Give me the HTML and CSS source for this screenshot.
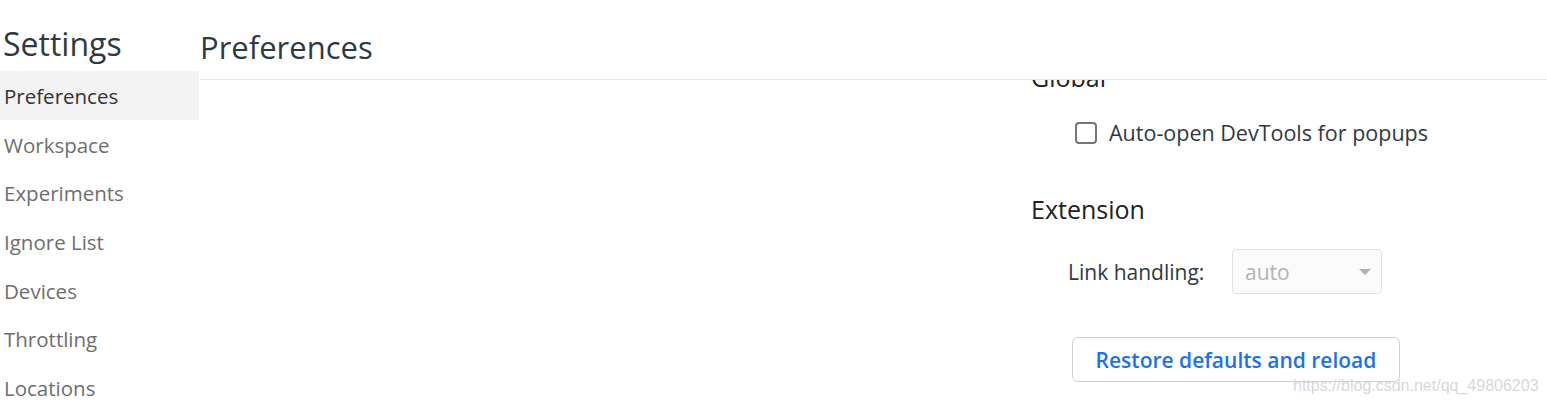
FILE: index.html
```html
<!DOCTYPE html>
<html>
<head>
<meta charset="utf-8">
<link rel="stylesheet" href="styles.css">
</head>
<body>
<div class="app">
  <nav class="sidebar">
    <div class="title">Settings</div>
    <ul class="tabs">
      <li class="tab selected">Preferences</li>
      <li class="tab">Workspace</li>
      <li class="tab">Experiments</li>
      <li class="tab">Ignore List</li>
      <li class="tab">Devices</li>
      <li class="tab">Throttling</li>
      <li class="tab">Locations</li>
    </ul>
  </nav>
  <main class="main">
    <header class="header">Preferences</header>
    <div class="viewport">
      <div class="column">
        <h2 class="section-title">Global</h2>
        <label class="check-row"><span class="checkbox"></span><span>Auto-open DevTools for popups</span></label>
        <h2 class="section-title ext">Extension</h2>
        <div class="field-row">
          <span class="field-label">Link handling:</span>
          <div class="select"><span>auto</span><span class="arrow"></span></div>
        </div>
        <button class="restore">Restore defaults and reload</button>
      </div>
    </div>
  </main>
</div>
<div class="watermark">https://blog.csdn.net/qq_49806203</div>
</body>
</html>
```
FILE: styles.css
```css
html, body {
  margin: 0;
  padding: 0;
  background: #fff;
  overflow: hidden;
}
body {
  font-family: "Open Sans", "Noto Sans", sans-serif;
  color: #333;
  width: 1547px;
  height: 405px;
  position: relative;
}
.app {
  display: flex;
  height: 405px;
}
.sidebar {
  width: 199px;
  flex: none;
}
.title {
  height: 71px;
  font-size: 32px;
  line-height: 1;
  padding: 28px 0 0 3px;
  box-sizing: border-box;
  color: #303942;
}
.tabs {
  list-style: none;
  margin: 0;
  padding: 0;
}
.tab {
  height: 48.7px;
  line-height: 50px;
  padding-left: 4px;
  font-size: 20.5px;
  color: #6e6e6e;
}
.tab.selected {
  background: #f3f3f3;
  color: #333;
}
.main {
  flex: 1;
  display: flex;
  flex-direction: column;
  margin-left: 1px;
}
.header {
  height: 80px;
  border-bottom: 1px solid #e6e6e6;
  font-size: 31px;
  line-height: 1;
  padding-top: 32px;
  box-sizing: border-box;
  color: #303942;
}
.viewport {
  flex: 1;
  overflow: hidden;
  display: flex;
  justify-content: flex-start;
}
.column {
  margin-left: 831px;
  margin-top: -20px;
  display: flex;
  flex-direction: column;
  align-items: flex-start;
}
.section-title {
  margin: 0;
  font-size: 25px;
  font-weight: 400;
  line-height: 34px;
  color: #222;
}
.check-row {
  display: flex;
  align-items: center;
  gap: 12px;
  margin: 24px 0 0 44px;
  font-size: 21.5px;
  color: #303942;
}
.checkbox {
  width: 18px;
  height: 18px;
  border: 2px solid #767676;
  border-radius: 4px;
}
.ext {
  margin-top: 45px;
}
.field-row {
  display: flex;
  align-items: center;
  margin: 23px 0 0 37px;
}
.field-label {
  font-size: 21px;
  color: #303942;
  width: 164px;
}
.select {
  width: 150px;
  height: 45px;
  box-sizing: border-box;
  border: 1px solid #e3e3e3;
  border-radius: 4px;
  background: #fbfbfb;
  display: flex;
  align-items: center;
  justify-content: space-between;
  padding: 0 10px 0 12px;
  font-size: 21px;
  color: #b3b3b3;
}
.arrow {
  width: 0;
  height: 0;
  border-left: 6px solid transparent;
  border-right: 6px solid transparent;
  border-top: 6px solid #b0b0b0;
}
.restore {
  margin: 43px 0 0 41px;
  width: 328px;
  height: 45px;
  border: 1px solid #cfcfcf;
  border-radius: 6px;
  background: #fff;
  font-family: inherit;
  font-size: 21px;
  font-weight: 600;
  color: #1a73e8;
  padding: 0;
}
.watermark {
  position: absolute;
  left: 1293px;
  top: 377px;
  font-family: "Liberation Sans", Arial, sans-serif;
  font-size: 16px;
  color: #d8d8d8;
}
```
